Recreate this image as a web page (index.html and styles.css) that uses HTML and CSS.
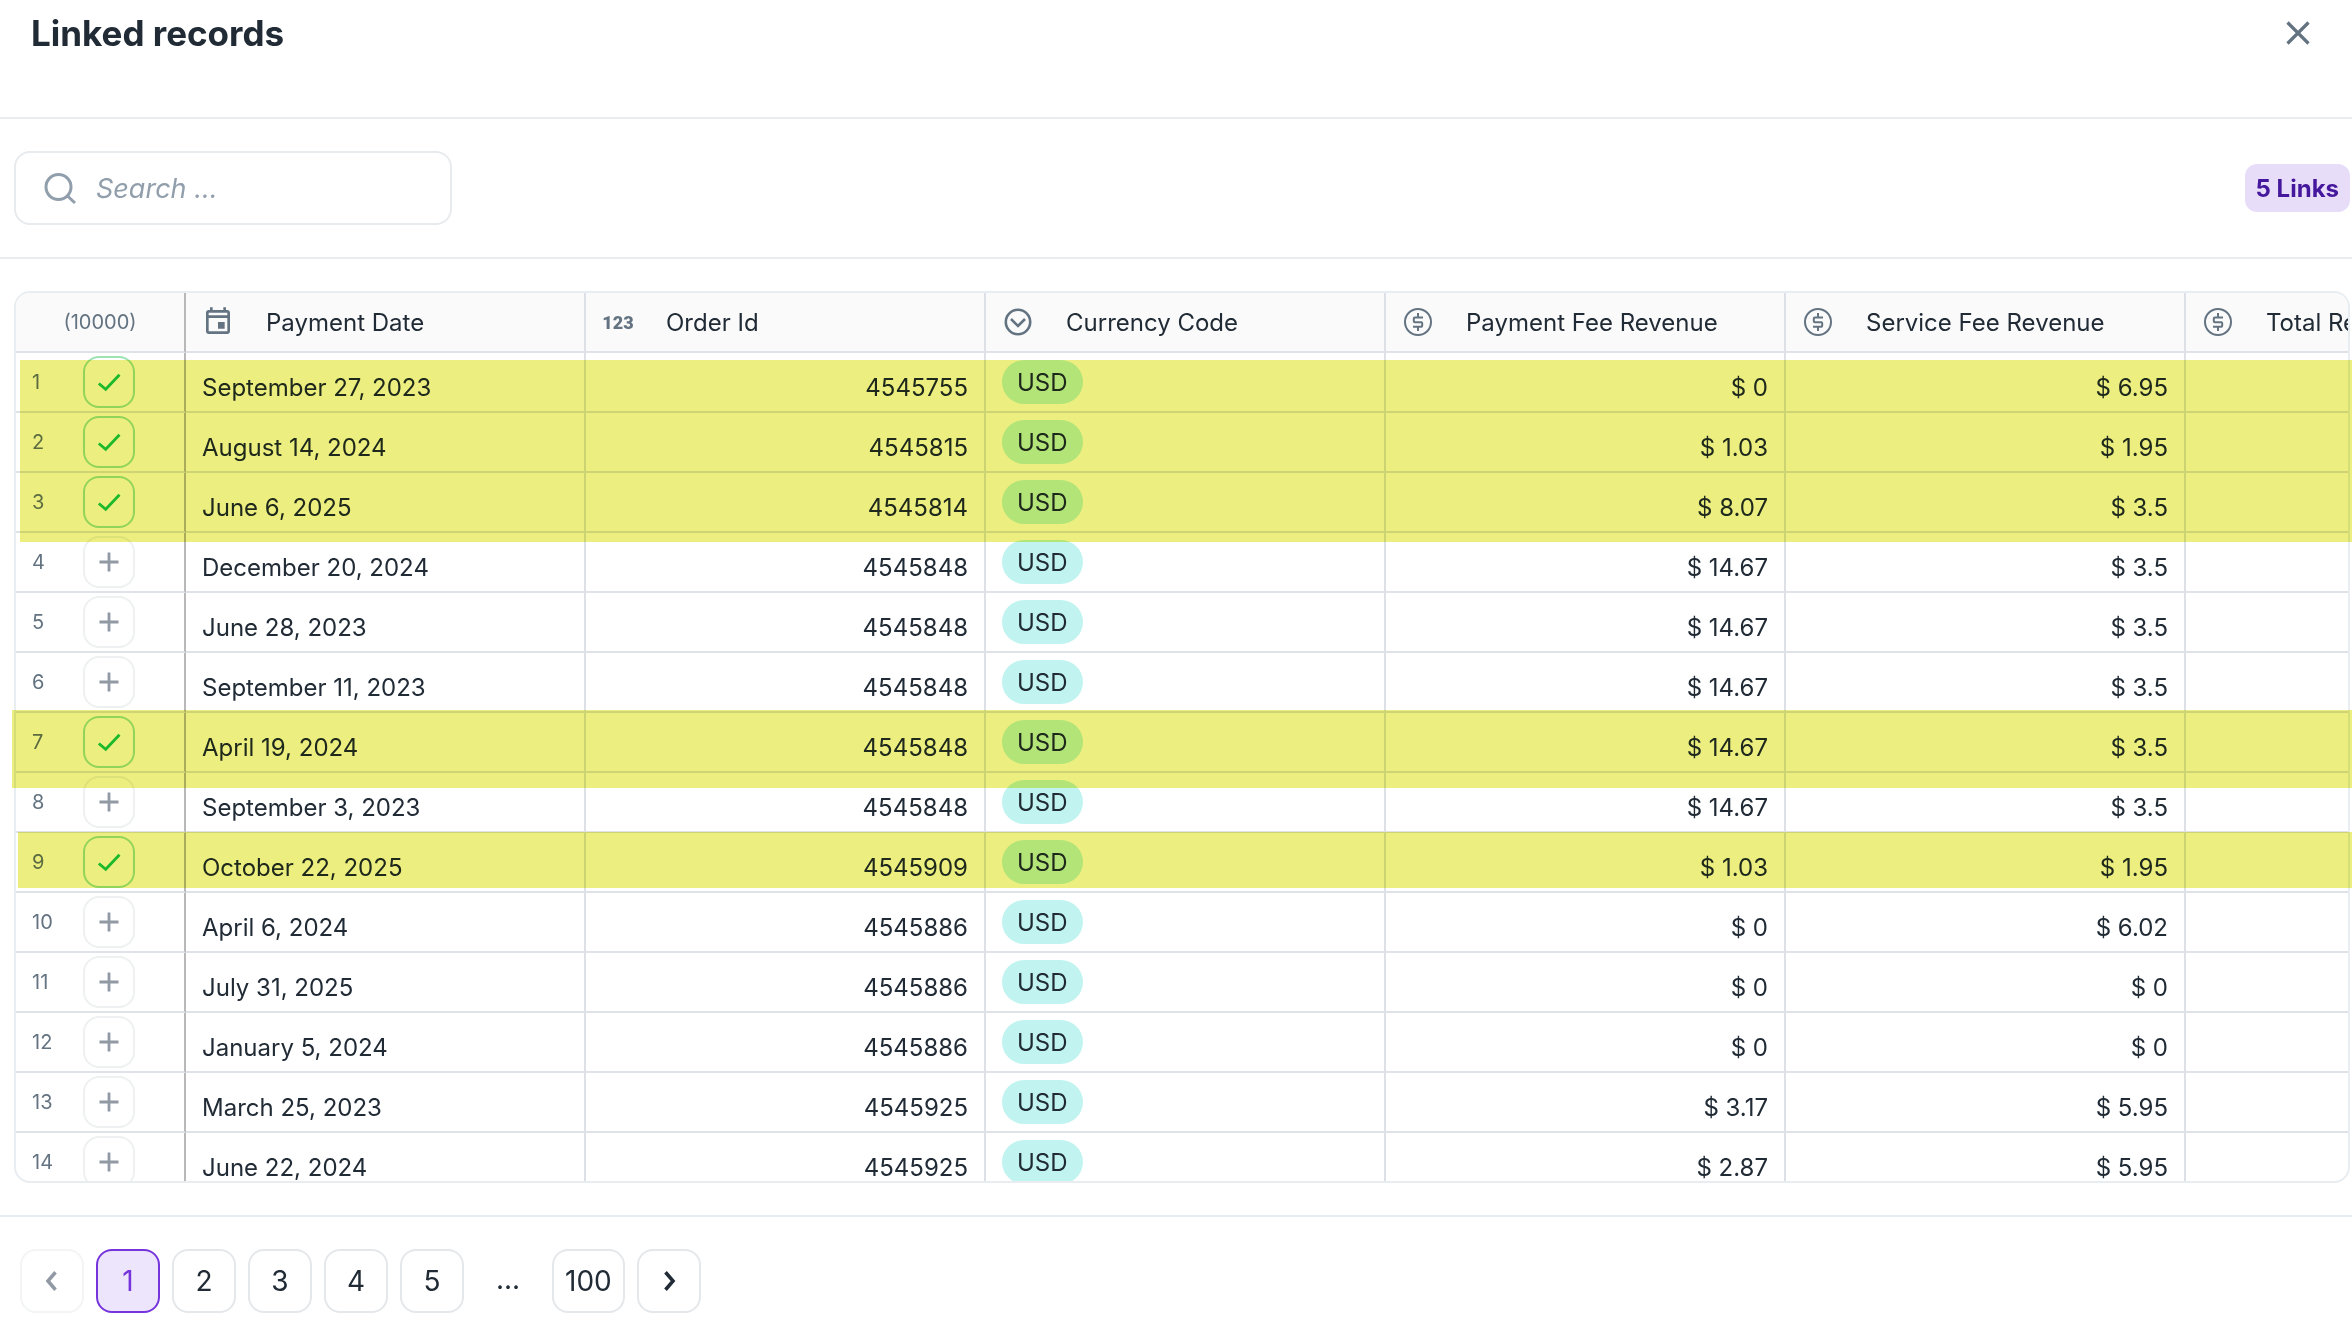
FILE: index.html
```html
<!DOCTYPE html>
<html lang="en">
<head>
    <meta charset="utf-8">
    <title>Linked records</title>
    <link rel="stylesheet" href="styles.css">
</head>
<body>
    <svg class="sprite" aria-hidden="true">
        <symbol id="check" viewBox="0 0 30 30"><path d="M4.800 16.500L11.700 22.300L25.500 7.700" fill="none" stroke="currentColor" stroke-width="2.8"/></symbol>
        <symbol id="plus" viewBox="0 0 30 30"><path d="M15 5.500v19M5.500 15h19" fill="none" stroke="currentColor" stroke-width="2.8"/></symbol>
        <symbol id="dollar" viewBox="0 0 32 32">
            <g fill="none" stroke="currentColor" stroke-width="2">
                <circle cx="16" cy="16" r="13"/>
                <path d="M21 11.6h-8.200a1 1 0 0 0-1 1v2.600a1 1 0 0 0 1 1h6.400a1 1 0 0 1 1 1v2.600a1 1 0 0 1-1 1H11M16 7v4.600M16 20.800V25"/>
            </g>
        </symbol>
    </svg>

    <header class="header">
        <h1>Linked records</h1>
        <button type="button" class="close" aria-label="Close">
            <svg viewBox="0 0 32 32"><path d="M5.5 5.5l21 21M26.5 5.5l-21 21" fill="none" stroke="currentColor" stroke-width="3.2"/></svg>
        </button>
    </header>

    <div class="toolbar">
        <label class="search">
            <svg viewBox="0 0 36 36"><g fill="none" stroke="currentColor" stroke-width="3"><circle cx="16.5" cy="17" r="12.5"/><path d="M25.5 26l7.5 7"/></g></svg>
            <input type="text" placeholder="Search ..." aria-label="Search">
        </label>
        <span class="links">5 Links</span>
    </div>

    <main class="content">
        <div class="grid">
            <table>
                <colgroup>
                    <col class="col-index">
                    <col><col><col><col><col><col>
                </colgroup>
                <thead>
                    <tr>
                        <th class="total">(10000)</th>
                        <th><div class="head"><svg viewBox="0 0 24 24"><path fill="currentColor" d="M19 3h-1V1h-2v2H8V1H6v2H5c-1.11 0-2 .9-2 2v14c0 1.1.89 2 2 2h14c1.1 0 2-.9 2-2V5c0-1.1-.9-2-2-2zm0 16H5V9h14v10zm0-12H5V5h14v2zM12 12h5v5h-5z"/></svg>Payment Date</div></th>
                        <th><div class="head"><span class="digits">123</span>Order Id</div></th>
                        <th><div class="head"><svg viewBox="0 0 32 32"><g fill="none" stroke="currentColor" stroke-width="2.6"><circle cx="16" cy="16" r="12.2"/><path d="M9 13l7 7 7-7"/></g></svg>Currency Code</div></th>
                        <th><div class="head"><svg><use href="#dollar"/></svg>Payment Fee Revenue</div></th>
                        <th><div class="head"><svg><use href="#dollar"/></svg>Service Fee Revenue</div></th>
                        <th><div class="head"><svg><use href="#dollar"/></svg>Total Revenue</div></th>
                    </tr>
                </thead>
                <tbody>
                    <tr>
                        <td><div class="index"><span>1</span><button type="button" class="link linked" aria-label="Unlink"><svg><use href="#check"/></svg></button></div></td>
                        <td class="text">September 27, 2023</td>
                        <td class="num">4545755</td>
                        <td><span class="pill">USD</span></td>
                        <td class="num">$ 0</td>
                        <td class="num">$ 6.95</td>
                        <td></td>
                    </tr>
                    <tr>
                        <td><div class="index"><span>2</span><button type="button" class="link linked" aria-label="Unlink"><svg><use href="#check"/></svg></button></div></td>
                        <td class="text">August 14, 2024</td>
                        <td class="num">4545815</td>
                        <td><span class="pill">USD</span></td>
                        <td class="num">$ 1.03</td>
                        <td class="num">$ 1.95</td>
                        <td></td>
                    </tr>
                    <tr>
                        <td><div class="index"><span>3</span><button type="button" class="link linked" aria-label="Unlink"><svg><use href="#check"/></svg></button></div></td>
                        <td class="text">June 6, 2025</td>
                        <td class="num">4545814</td>
                        <td><span class="pill">USD</span></td>
                        <td class="num">$ 8.07</td>
                        <td class="num">$ 3.5</td>
                        <td></td>
                    </tr>
                    <tr>
                        <td><div class="index"><span>4</span><button type="button" class="link" aria-label="Link"><svg><use href="#plus"/></svg></button></div></td>
                        <td class="text">December 20, 2024</td>
                        <td class="num">4545848</td>
                        <td><span class="pill">USD</span></td>
                        <td class="num">$ 14.67</td>
                        <td class="num">$ 3.5</td>
                        <td></td>
                    </tr>
                    <tr>
                        <td><div class="index"><span>5</span><button type="button" class="link" aria-label="Link"><svg><use href="#plus"/></svg></button></div></td>
                        <td class="text">June 28, 2023</td>
                        <td class="num">4545848</td>
                        <td><span class="pill">USD</span></td>
                        <td class="num">$ 14.67</td>
                        <td class="num">$ 3.5</td>
                        <td></td>
                    </tr>
                    <tr>
                        <td><div class="index"><span>6</span><button type="button" class="link" aria-label="Link"><svg><use href="#plus"/></svg></button></div></td>
                        <td class="text">September 11, 2023</td>
                        <td class="num">4545848</td>
                        <td><span class="pill">USD</span></td>
                        <td class="num">$ 14.67</td>
                        <td class="num">$ 3.5</td>
                        <td></td>
                    </tr>
                    <tr>
                        <td><div class="index"><span>7</span><button type="button" class="link linked" aria-label="Unlink"><svg><use href="#check"/></svg></button></div></td>
                        <td class="text">April 19, 2024</td>
                        <td class="num">4545848</td>
                        <td><span class="pill">USD</span></td>
                        <td class="num">$ 14.67</td>
                        <td class="num">$ 3.5</td>
                        <td></td>
                    </tr>
                    <tr>
                        <td><div class="index"><span>8</span><button type="button" class="link" aria-label="Link"><svg><use href="#plus"/></svg></button></div></td>
                        <td class="text">September 3, 2023</td>
                        <td class="num">4545848</td>
                        <td><span class="pill">USD</span></td>
                        <td class="num">$ 14.67</td>
                        <td class="num">$ 3.5</td>
                        <td></td>
                    </tr>
                    <tr>
                        <td><div class="index"><span>9</span><button type="button" class="link linked" aria-label="Unlink"><svg><use href="#check"/></svg></button></div></td>
                        <td class="text">October 22, 2025</td>
                        <td class="num">4545909</td>
                        <td><span class="pill">USD</span></td>
                        <td class="num">$ 1.03</td>
                        <td class="num">$ 1.95</td>
                        <td></td>
                    </tr>
                    <tr>
                        <td><div class="index"><span>10</span><button type="button" class="link" aria-label="Link"><svg><use href="#plus"/></svg></button></div></td>
                        <td class="text">April 6, 2024</td>
                        <td class="num">4545886</td>
                        <td><span class="pill">USD</span></td>
                        <td class="num">$ 0</td>
                        <td class="num">$ 6.02</td>
                        <td></td>
                    </tr>
                    <tr>
                        <td><div class="index"><span>11</span><button type="button" class="link" aria-label="Link"><svg><use href="#plus"/></svg></button></div></td>
                        <td class="text">July 31, 2025</td>
                        <td class="num">4545886</td>
                        <td><span class="pill">USD</span></td>
                        <td class="num">$ 0</td>
                        <td class="num">$ 0</td>
                        <td></td>
                    </tr>
                    <tr>
                        <td><div class="index"><span>12</span><button type="button" class="link" aria-label="Link"><svg><use href="#plus"/></svg></button></div></td>
                        <td class="text">January 5, 2024</td>
                        <td class="num">4545886</td>
                        <td><span class="pill">USD</span></td>
                        <td class="num">$ 0</td>
                        <td class="num">$ 0</td>
                        <td></td>
                    </tr>
                    <tr>
                        <td><div class="index"><span>13</span><button type="button" class="link" aria-label="Link"><svg><use href="#plus"/></svg></button></div></td>
                        <td class="text">March 25, 2023</td>
                        <td class="num">4545925</td>
                        <td><span class="pill">USD</span></td>
                        <td class="num">$ 3.17</td>
                        <td class="num">$ 5.95</td>
                        <td></td>
                    </tr>
                    <tr>
                        <td><div class="index"><span>14</span><button type="button" class="link" aria-label="Link"><svg><use href="#plus"/></svg></button></div></td>
                        <td class="text">June 22, 2024</td>
                        <td class="num">4545925</td>
                        <td><span class="pill">USD</span></td>
                        <td class="num">$ 2.87</td>
                        <td class="num">$ 5.95</td>
                        <td></td>
                    </tr>
                </tbody>
            </table>
        </div>
        <!-- marker strokes over the linked rows -->
        <div class="marker marker-top"></div>
        <div class="marker marker-middle"></div>
        <div class="marker marker-bottom"></div>
    </main>

    <nav class="pages">
        <button type="button" disabled aria-label="Previous page"><svg viewBox="0 0 24 24"><path d="M15 4.5L8.5 12l6.5 7.5" fill="none" stroke="currentColor" stroke-width="3"/></svg></button>
        <button type="button" class="active">1</button>
        <button type="button">2</button>
        <button type="button">3</button>
        <button type="button">4</button>
        <button type="button">5</button>
        <span class="dots">...</span>
        <button type="button">100</button>
        <button type="button" aria-label="Next page"><svg viewBox="0 0 24 24"><path d="M9 4.5L15.5 12L9 19.5" fill="none" stroke="currentColor" stroke-width="3"/></svg></button>
    </nav>
</body>
</html>
```

FILE: styles.css
```css
* {
    box-sizing: border-box;
}
body {
    display: flex;
    flex-direction: column;
    height: 100vh;
    margin: 0;
    overflow: hidden;
    background: #fff;
    color: #212b36;
    font-family: Inter, "Liberation Sans", sans-serif;
    font-size: 24px;
}
button, input {
    font-family: inherit;
    color: inherit;
}
button {
    display: flex;
    align-items: center;
    justify-content: center;
    padding: 0;
    background: #fff;
    cursor: pointer;
}
.sprite {
    display: none;
}

.header {
    display: flex;
    justify-content: space-between;
    align-items: flex-start;
    padding: 11px 38px 62px 31px;
    border-bottom: 2px solid #e8edf1;
}
.header h1 {
    margin: 0;
    font-size: 35px;
    line-height: 44px;
    font-weight: 700;
}
.close {
    height: 44px;
    border: none;
    color: #637381;
}
.close svg {
    width: 32px;
    height: 32px;
}

.toolbar {
    display: flex;
    justify-content: space-between;
    align-items: center;
    padding: 32px 2px 32px 14px;
    border-bottom: 2px solid #e8edf1;
}
.search {
    display: flex;
    align-items: center;
    gap: 18px;
    width: 438px;
    height: 74px;
    padding: 0 26px;
    border: 2px solid #e8ebee;
    border-radius: 16px;
    color: #919eab;
}
.search svg {
    flex: none;
    width: 36px;
    height: 36px;
}
.search input {
    flex: 1;
    min-width: 0;
    padding: 0;
    border: none;
    outline: none;
    background: none;
    font-size: 27px;
    font-style: italic;
}
.search input::placeholder {
    color: #919eab;
}
.links {
    padding: 1px 11px 0;
    border-radius: 12px;
    background: #e8ddf9;
    color: #44179c;
    line-height: 47px;
    font-weight: 700;
}

.content {
    position: relative;
    flex: 1;
    min-height: 0;
    padding: 32px 2px 32px 14px;
}
.grid {
    height: 100%;
    overflow: hidden;
    border: 2px solid #e8edf1;
    border-radius: 16px;
}
table {
    width: 2570px;
    table-layout: fixed;
    border-collapse: separate;
    border-spacing: 0;
}
.col-index {
    width: 170px;
}
th, td {
    height: 60px;
    padding: 0 16px;
    border-right: 2px solid #dde1e6;
    border-bottom: 2px solid #dfe3e8;
    font-weight: 400;
    text-align: left;
    white-space: nowrap;
}
th {
    background: #fafafa;
}
th:first-child, td:first-child {
    border-right-color: #b8b8b8;
}
.total {
    color: #637381;
    font-size: 20px;
    text-align: center;
}
.head {
    display: flex;
    align-items: center;
    gap: 32px;
}
.head svg {
    width: 32px;
    height: 32px;
    color: #637381;
}
.digits {
    width: 32px;
    color: #637381;
    font-family: Roboto, sans-serif;
    font-size: 18px;
    font-weight: 900;
    text-align: center;
}
.index {
    display: flex;
    align-items: center;
    color: #637381;
    font-size: 20px;
}
.index span {
    width: 51px;
}
.link {
    width: 52px;
    height: 52px;
    border: 2px solid #eef0f1;
    border-radius: 16px;
    color: #919aa4;
}
.link svg {
    width: 30px;
    height: 30px;
}
.linked {
    border-color: #9ee3b4;
    color: #1fc656;
}
.text, .num {
    padding-top: 11px;
}
.num {
    text-align: right;
}
.pill {
    display: inline-block;
    padding: 1px 15px 0;
    border-radius: 22px;
    background: #c1f4f1;
    line-height: 43px;
    vertical-align: middle;
}

.marker {
    position: absolute;
    right: 0;
    background: #ecef7f;
    mix-blend-mode: multiply;
    pointer-events: none;
}
.marker-top {
    top: 101px;
    left: 20px;
    height: 182px;
}
.marker-middle {
    top: 451px;
    left: 12px;
    height: 78px;
}
.marker-bottom {
    top: 573px;
    left: 18px;
    height: 56px;
}

.pages {
    display: flex;
    gap: 12px;
    padding: 32px 20px 19px;
    border-top: 2px solid #e8edf1;
}
.pages button, .dots {
    min-width: 64px;
    height: 64px;
    font-size: 28px;
    line-height: 60px;
    text-align: center;
}
.pages button {
    padding: 0 11px;
    border: 2px solid #e5e8eb;
    border-radius: 16px;
}
.pages svg {
    width: 28px;
    height: 28px;
}
.pages button:disabled {
    border-color: #f3f4f5;
    color: #919aa4;
}
.pages .active {
    border-color: #7635dc;
    background: #ede5fb;
    color: #7635dc;
}
```
